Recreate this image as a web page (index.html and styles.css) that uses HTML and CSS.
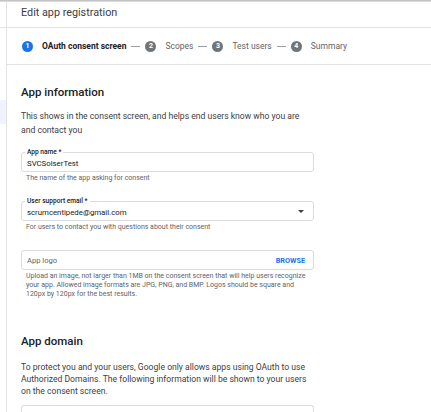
FILE: index.html
```html
<!DOCTYPE html>
<html lang="en">

<head>
  <meta charset="UTF-8">
  <meta name="viewport" content="width=device-width, initial-scale=1.0">
  <title>Edit app registration</title>
  <link rel="stylesheet" href="styles.css">
</head>

<body>
  <div class="top-shade"></div>
  <div class="layout">
    <div class="rail">
      <div class="rail-head"></div>
      <div class="rail-active"></div>
    </div>
    <div class="main">
      <div class="title">Edit app registration</div>
      <div class="stepper">
        <span class="step-num active">1</span>
        <span class="step-label active">OAuth consent screen</span>
        <span class="step-dash"></span>
        <span class="step-num">2</span>
        <span class="step-label">Scopes</span>
        <span class="step-dash"></span>
        <span class="step-num">3</span>
        <span class="step-label">Test users</span>
        <span class="step-dash"></span>
        <span class="step-num">4</span>
        <span class="step-label">Summary</span>
      </div>
      <div class="content">
        <h2 class="section-title">App information</h2>
        <p class="section-text">This shows in the consent screen, and helps end users know who you are and contact you</p>

        <div class="field first">
          <div class="field-box">
            <span class="field-label">App name *</span>
            <span class="field-value">SVCSolserTest</span>
          </div>
          <div class="field-hint">The name of the app asking for consent</div>
        </div>

        <div class="field">
          <div class="field-box">
            <span class="field-label">User support email *</span>
            <span class="field-value">scrumcentipede@gmail.com</span>
            <span class="caret"></span>
          </div>
          <div class="field-hint">For users to contact you with questions about their consent</div>
        </div>

        <div class="field">
          <div class="field-box">
            <span class="field-placeholder">App logo</span>
            <span class="browse">BROWSE</span>
          </div>
          <div class="field-hint">Upload an image, not larger than 1MB on the consent screen that will help users recognize your app. Allowed image formats are JPG, PNG, and BMP. Logos should be square and 120px by 120px for the best results.</div>
        </div>

        <h2 class="section-title domain">App domain</h2>
        <p class="section-text tight">To protect you and your users, Google only allows apps using OAuth to use Authorized Domains. The following information will be shown to your users on the consent screen.</p>

        <div class="field-box next"></div>
      </div>
    </div>
  </div>
</body>

</html>
```

FILE: styles.css
```css
body {
  margin: 0;
  overflow: hidden;
  background: #fff;
  font-family: Roboto, "Liberation Sans", sans-serif;
  color: #3c4043;
}

.top-shade {
  height: 2px;
  background: linear-gradient(#b8b8b8, #e6e6e6);
}

.layout {
  display: flex;
}

.rail {
  width: 6px;
  border-right: 1px solid #e3e3e3;
  height: 410px;
}

.rail-head {
  height: 25px;
  border-bottom: 1px solid #e3e3e3;
}

.rail-active {
  margin-top: 72px;
  height: 24px;
  background: #eef3fd;
}

.main {
  flex: 1;
}

.title {
  height: 25px;
  line-height: 22px;
  padding-left: 14px;
  font-size: 10.8px;
  color: #3c4043;
  border-bottom: 1px solid #e3e3e3;
}

.stepper {
  height: 36px;
  display: flex;
  align-items: center;
  gap: 5px;
  padding-left: 15px;
  border-bottom: 1px solid #e3e3e3;
  font-size: 8.5px;
  color: #5f6368;
}

.step-num {
  width: 11px;
  height: 11px;
  border-radius: 50%;
  background: #70757a;
  color: #fff;
  font-size: 7px;
  font-weight: 700;
  line-height: 11px;
  text-align: center;
}

.step-num.active {
  background: #1a73e8;
}

.step-label {
  margin-left: 4px;
}

.step-label.active {
  color: #202124;
  font-weight: 700;
}

.step-dash {
  width: 9px;
  border-top: 1px solid #9aa0a6;
}

.content {
  padding-left: 14px;
  width: 293px;
}

.section-title {
  margin: 18px 0 0;
  font-size: 11.5px;
  font-weight: 500;
  line-height: 18px;
  color: #202124;
}

.section-title.domain {
  margin-top: 33px;
}

.section-text {
  margin: 9px 0 0;
  font-size: 8.6px;
  line-height: 13.5px;
  color: #3c4043;
}

.section-text.tight {
  margin-top: 11px;
  line-height: 12px;
}

.field {
  margin-top: 18px;
}

.field.first {
  margin-top: 15px;
}

.field-box {
  position: relative;
  height: 20px;
  border: 1px solid #dadce0;
  border-radius: 3px;
  box-sizing: border-box;
  display: flex;
  align-items: center;
  padding: 0 5px;
}

.field-label {
  position: absolute;
  left: 3px;
  top: -5px;
  padding: 0 2px;
  background: #fff;
  font-size: 6.6px;
  font-weight: 500;
  line-height: 8px;
  color: #202124;
}

.field-value {
  flex: 1;
  font-size: 7.8px;
  color: #202124;
  padding-top: 2px;
}

.field-placeholder {
  flex: 1;
  font-size: 7.6px;
  color: #5f6368;
}

.caret {
  width: 0;
  height: 0;
  border-left: 3px solid transparent;
  border-right: 3px solid transparent;
  border-top: 3px solid #3c4043;
  margin-right: 4px;
}

.browse {
  font-size: 7.3px;
  font-weight: 700;
  color: #1a73e8;
  margin-right: 3px;
}

.field-hint {
  margin-top: 2px;
  padding-left: 5px;
  padding-right: 4px;
  font-size: 7px;
  line-height: 9px;
  color: #5f6368;
}

.field-box.next {
  margin-top: 8px;
  height: 12px;
  border-bottom: none;
  border-radius: 3px 3px 0 0;
}
```
